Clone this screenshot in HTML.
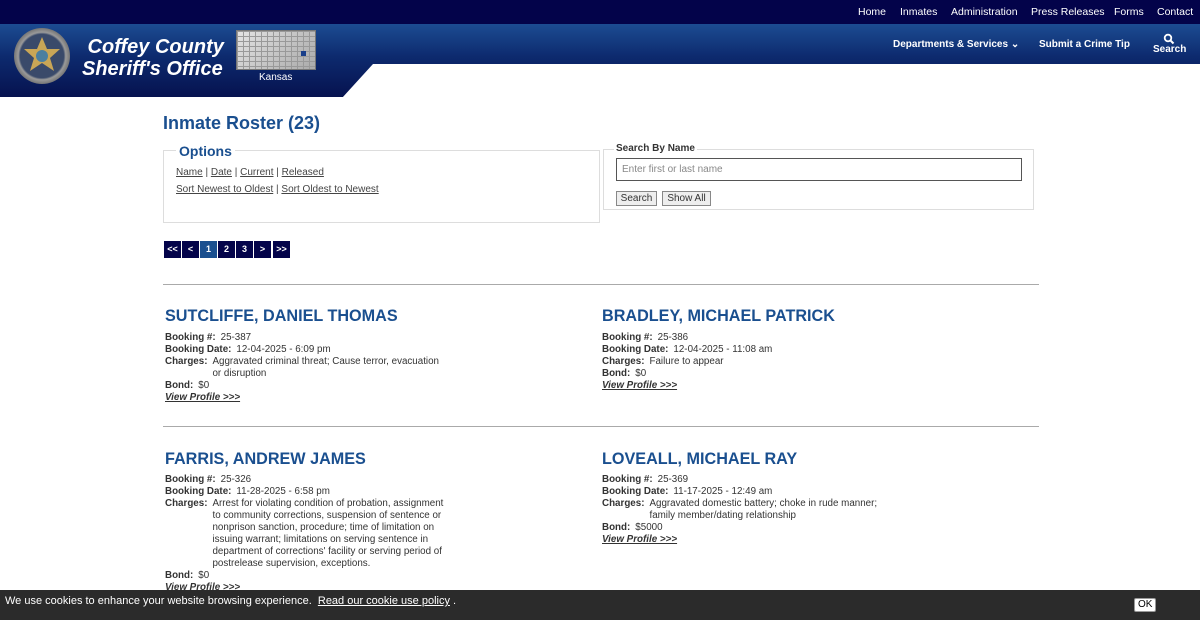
<!DOCTYPE html>
<html><head><meta charset="utf-8"><style>
*{margin:0;padding:0;box-sizing:border-box}
body{width:1200px;height:620px;overflow:hidden;background:#fff;font-family:"Liberation Sans",Arial,sans-serif;position:relative;color:#333}
.a{position:absolute}
#top{left:0;top:0;width:1200px;height:24px;background:#03034a}
#top span{position:absolute;top:6px;color:#fff;font-size:10.5px}
#band{left:0;top:24px;width:1200px;height:73px;background:linear-gradient(#1c4c92,#0d2a6e 45%,#06124f)}
#cut{left:0;top:64px;width:1200px;height:34px}
.nav2{color:#fff;font-size:10px;font-weight:bold}
.title{color:#fff;font-style:italic;font-weight:bold;font-size:20px;line-height:22px}
h1{position:absolute;left:163px;top:113px;font-size:18px;color:#1a4f8f;font-weight:bold}
.box{border:1px solid #ddd}
.lnk{color:#444;text-decoration:underline;font-size:10px}
.pg{position:absolute;top:241px;width:17px;height:17px;background:#03034a;color:#fff;font-size:9px;font-weight:bold;text-align:center;line-height:17px}
hr.s{position:absolute;left:163px;width:876px;border:0;border-top:1px solid #aaa}
.name{position:absolute;font-size:16.2px;font-weight:bold;color:#1a4f8f}
.info{position:absolute;font-size:9.8px;line-height:12px;color:#333}
.row{display:flex}
.row b{margin-right:5px;white-space:nowrap}
.vp{font-style:italic;font-weight:bold;text-decoration:underline;color:#333}
#cookie{left:0;top:590px;width:1200px;height:30px;background:#2b2b2b;color:#fff;font-size:11px}
</style></head><body>
<div id="top" class="a">
<span style="left:858px">Home</span><span style="left:900px">Inmates</span><span style="left:951px">Administration</span><span style="left:1031px">Press Releases</span><span style="left:1114px">Forms</span><span style="left:1157px">Contact</span>
</div>
<div id="band" class="a"></div>
<svg class="a" id="cut" width="1200" height="34" viewBox="0 0 1200 34"><polygon points="373,0 1200,0 1200,34 342,34" fill="#fff"/></svg>
<div class="a" style="left:14px;top:28px;width:56px;height:56px;border-radius:50%;background:radial-gradient(#3a4a6a 55%,#9a9a9a 60%,#666 75%,#333 100%)"></div>
<svg class="a" style="left:20px;top:34px" width="44" height="44" viewBox="0 0 44 44"><polygon points="22,3 27,15 40,15 30,24 34,37 22,29 10,37 14,24 4,15 17,15" fill="#c9a656"/><circle cx="22" cy="22" r="6" fill="#4a7fa0"/></svg>
<div class="a title" style="left:82px;top:36px">&nbsp;Coffey County<br>Sheriff's Office</div>
<div class="a" style="left:236px;top:30px;width:80px;height:40px;border:1px solid #777;background-image:linear-gradient(#999 1px,transparent 1px),linear-gradient(90deg,#999 1px,transparent 1px),linear-gradient(135deg,#e4e4e4,#aaa);background-size:6px 5px,6px 5px,100% 100%"></div>
<div class="a" style="left:301px;top:51px;width:5px;height:5px;background:#1a3f8a"></div>
<div class="a" style="left:259px;top:72px;color:#fff;font-size:10px">Kansas</div>
<div class="a nav2" style="left:893px;top:39px">Departments &amp; Services &#8964;</div>
<div class="a nav2" style="left:1039px;top:39px">Submit a Crime Tip</div>
<svg class="a" style="left:1163px;top:33px" width="12" height="12" viewBox="0 0 12 12"><circle cx="5" cy="5" r="3.3" stroke="#fff" stroke-width="1.8" fill="none"/><line x1="7.5" y1="7.5" x2="10.5" y2="10.5" stroke="#fff" stroke-width="2"/></svg>
<div class="a nav2" style="left:1153px;top:44px">Search</div>

<h1>Inmate Roster (23)</h1>
<div class="a box" style="left:163px;top:150px;width:437px;height:73px"></div>
<div class="a" style="left:176px;top:143px;background:#fff;padding:0 3px;font-size:14px;font-weight:bold;color:#1a4f8f">Options</div>
<div class="a lnk" style="left:176px;top:167px;text-decoration:none"><span class="lnk">Name</span> | <span class="lnk">Date</span> | <span class="lnk">Current</span> | <span class="lnk">Released</span></div>
<div class="a lnk" style="left:176px;top:184px;text-decoration:none"><span class="lnk">Sort Newest to Oldest</span> | <span class="lnk">Sort Oldest to Newest</span></div>

<div class="a box" style="left:603px;top:149px;width:431px;height:61px"></div>
<div class="a" style="left:614px;top:143px;background:#fff;padding:0 2px;font-size:10px;font-weight:bold;color:#333">Search By Name</div>
<div class="a" style="left:616px;top:158px;width:406px;height:23px;border:1px solid #555;font-size:10px;color:#888;padding:5px 5px">Enter first or last name</div>
<div class="a" style="left:616px;top:191px;width:41px;height:15px;border:1px solid #888;background:#eee;font-size:10px;text-align:center;line-height:13px">Search</div>
<div class="a" style="left:662px;top:191px;width:49px;height:15px;border:1px solid #888;background:#eee;font-size:10px;text-align:center;line-height:13px">Show All</div>

<div class="pg" style="left:164px">&lt;&lt;</div><div class="pg" style="left:182px">&lt;</div><div class="pg" style="left:200px;background:#1a4f8f">1</div><div class="pg" style="left:218px">2</div><div class="pg" style="left:236px">3</div><div class="pg" style="left:254px">&gt;</div><div class="pg" style="left:273px">&gt;&gt;</div>

<hr class="s" style="top:284px">
<div class="name" style="left:165px;top:307px">SUTCLIFFE, DANIEL THOMAS</div>
<div class="info" style="left:165px;top:332px;width:285px">
<div class="row"><b>Booking #:</b>25-387</div>
<div class="row"><b>Booking Date:</b>12-04-2025 - 6:09 pm</div>
<div class="row"><b>Charges:</b><span>Aggravated criminal threat; Cause terror, evacuation or disruption</span></div>
<div class="row"><b>Bond:</b>$0</div>
<div class="vp">View Profile &gt;&gt;&gt;</div></div>

<div class="name" style="left:602px;top:307px">BRADLEY, MICHAEL PATRICK</div>
<div class="info" style="left:602px;top:332px;width:285px">
<div class="row"><b>Booking #:</b>25-386</div>
<div class="row"><b>Booking Date:</b>12-04-2025 - 11:08 am</div>
<div class="row"><b>Charges:</b><span>Failure to appear</span></div>
<div class="row"><b>Bond:</b>$0</div>
<div class="vp">View Profile &gt;&gt;&gt;</div></div>

<hr class="s" style="top:426px">
<div class="name" style="left:165px;top:450px">FARRIS, ANDREW JAMES</div>
<div class="info" style="left:165px;top:474px;width:285px">
<div class="row"><b>Booking #:</b>25-326</div>
<div class="row"><b>Booking Date:</b>11-28-2025 - 6:58 pm</div>
<div class="row"><b>Charges:</b><span>Arrest for violating condition of probation, assignment to community corrections, suspension of sentence or nonprison sanction, procedure; time of limitation on issuing warrant; limitations on serving sentence in department of corrections' facility or serving period of postrelease supervision, exceptions.</span></div>
<div class="row"><b>Bond:</b>$0</div>
<div class="vp">View Profile &gt;&gt;&gt;</div></div>

<div class="name" style="left:602px;top:450px">LOVEALL, MICHAEL RAY</div>
<div class="info" style="left:602px;top:474px;width:285px">
<div class="row"><b>Booking #:</b>25-369</div>
<div class="row"><b>Booking Date:</b>11-17-2025 - 12:49 am</div>
<div class="row"><b>Charges:</b><span>Aggravated domestic battery; choke in rude manner; family member/dating relationship</span></div>
<div class="row"><b>Bond:</b>$5000</div>
<div class="vp">View Profile &gt;&gt;&gt;</div></div>

<div id="cookie" class="a"><span class="a" style="left:5px;top:5px">We use cookies to enhance your website browsing experience. &nbsp;<u>Read our cookie use policy</u> .</span>
<span class="a" style="left:1134px;top:8px;background:#fff;color:#000;border:1px solid #999;border-radius:2px;font-size:10px;padding:0 3px;line-height:12px">OK</span></div>
</body></html>
